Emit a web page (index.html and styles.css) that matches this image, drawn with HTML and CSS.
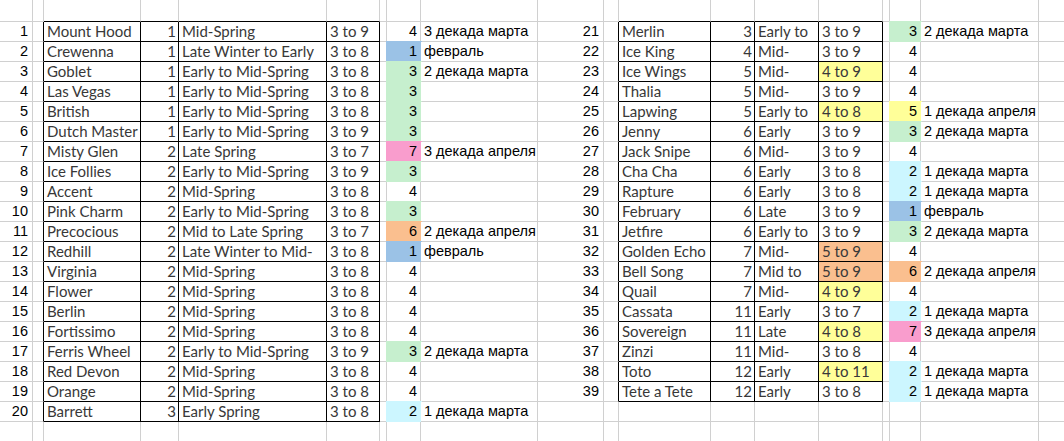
FILE: index.html
```html
<!DOCTYPE html>
<html lang="ru">
<head>
<meta charset="utf-8">
<title>Sheet</title>
<link rel="stylesheet" href="styles.css">
</head>
<body>
<div class="s">
<div></div><div></div><div class="bt"></div><div class="bt"></div><div class="bt"></div><div class="bt"></div><div></div><div></div><div></div><div></div><div></div><div class="bt"></div><div class="bt"></div><div class="bt"></div><div class="bt"></div><div></div><div></div><div></div><div></div>

<div class="n rn">1</div><div class="bl"></div><div class="t">Mount Hood</div><div class="t r">1</div><div class="t">Mid-Spring</div><div class="t">3 to 9</div><div></div><div class="n">4</div><div>3 декада марта</div>
<div class="n rn">21</div><div class="bl"></div><div class="t">Merlin</div><div class="t r">3</div><div class="t">Early to</div><div class="t">3 to 9</div><div></div><div class="n fg">3</div><div>2 декада марта</div><div></div>

<div class="n rn">2</div><div class="bl"></div><div class="t">Crewenna</div><div class="t r">1</div><div class="t">Late Winter to Early</div><div class="t">3 to 8</div><div></div><div class="n fb">1</div><div>февраль</div>
<div class="n rn">22</div><div class="bl"></div><div class="t">Ice King</div><div class="t r">4</div><div class="t">Mid-</div><div class="t">3 to 9</div><div></div><div class="n">4</div><div></div><div></div>

<div class="n rn">3</div><div class="bl"></div><div class="t">Goblet</div><div class="t r">1</div><div class="t">Early to Mid-Spring</div><div class="t">3 to 8</div><div></div><div class="n fg">3</div><div>2 декада марта</div>
<div class="n rn">23</div><div class="bl"></div><div class="t">Ice Wings</div><div class="t r">5</div><div class="t">Mid-</div><div class="t ty">4 to 9</div><div></div><div class="n">4</div><div></div><div></div>

<div class="n rn">4</div><div class="bl"></div><div class="t">Las Vegas</div><div class="t r">1</div><div class="t">Early to Mid-Spring</div><div class="t">3 to 8</div><div></div><div class="n fg">3</div><div></div>
<div class="n rn">24</div><div class="bl"></div><div class="t">Thalia</div><div class="t r">5</div><div class="t">Mid-</div><div class="t">3 to 9</div><div></div><div class="n">4</div><div></div><div></div>

<div class="n rn">5</div><div class="bl"></div><div class="t">British</div><div class="t r">1</div><div class="t">Early to Mid-Spring</div><div class="t">3 to 8</div><div></div><div class="n fg">3</div><div></div>
<div class="n rn">25</div><div class="bl"></div><div class="t">Lapwing</div><div class="t r">5</div><div class="t">Early to</div><div class="t ty">4 to 8</div><div></div><div class="n fy">5</div><div>1 декада апреля</div><div></div>

<div class="n rn">6</div><div class="bl"></div><div class="t">Dutch Master</div><div class="t r">1</div><div class="t">Early to Mid-Spring</div><div class="t">3 to 9</div><div></div><div class="n fg">3</div><div></div>
<div class="n rn">26</div><div class="bl"></div><div class="t">Jenny</div><div class="t r">6</div><div class="t">Early</div><div class="t">3 to 9</div><div></div><div class="n fg">3</div><div>2 декада марта</div><div></div>

<div class="n rn">7</div><div class="bl"></div><div class="t">Misty Glen</div><div class="t r">2</div><div class="t">Late Spring</div><div class="t">3 to 7</div><div></div><div class="n fp">7</div><div>3 декада апреля</div>
<div class="n rn">27</div><div class="bl"></div><div class="t">Jack Snipe</div><div class="t r">6</div><div class="t">Mid-</div><div class="t">3 to 9</div><div></div><div class="n">4</div><div></div><div></div>

<div class="n rn">8</div><div class="bl"></div><div class="t">Ice Follies</div><div class="t r">2</div><div class="t">Early to Mid-Spring</div><div class="t">3 to 9</div><div></div><div class="n fg">3</div><div></div>
<div class="n rn">28</div><div class="bl"></div><div class="t">Cha Cha</div><div class="t r">6</div><div class="t">Early</div><div class="t">3 to 8</div><div></div><div class="n fc">2</div><div>1 декада марта</div><div></div>

<div class="n rn">9</div><div class="bl"></div><div class="t">Accent</div><div class="t r">2</div><div class="t">Mid-Spring</div><div class="t">3 to 8</div><div></div><div class="n">4</div><div></div>
<div class="n rn">29</div><div class="bl"></div><div class="t">Rapture</div><div class="t r">6</div><div class="t">Early</div><div class="t">3 to 8</div><div></div><div class="n fc">2</div><div>1 декада марта</div><div></div>

<div class="n rn">10</div><div class="bl"></div><div class="t">Pink Charm</div><div class="t r">2</div><div class="t">Early to Mid-Spring</div><div class="t">3 to 8</div><div></div><div class="n fg">3</div><div></div>
<div class="n rn">30</div><div class="bl"></div><div class="t">February</div><div class="t r">6</div><div class="t">Late</div><div class="t">3 to 9</div><div></div><div class="n fb">1</div><div>февраль</div><div></div>

<div class="n rn">11</div><div class="bl"></div><div class="t">Precocious</div><div class="t r">2</div><div class="t">Mid to Late Spring</div><div class="t">3 to 7</div><div></div><div class="n fo">6</div><div>2 декада апреля</div>
<div class="n rn">31</div><div class="bl"></div><div class="t">Jetfire</div><div class="t r">6</div><div class="t">Early to</div><div class="t">3 to 9</div><div></div><div class="n fg">3</div><div>2 декада марта</div><div></div>

<div class="n rn">12</div><div class="bl"></div><div class="t">Redhill</div><div class="t r">2</div><div class="t">Late Winter to Mid-</div><div class="t">3 to 8</div><div></div><div class="n fb">1</div><div>февраль</div>
<div class="n rn">32</div><div class="bl"></div><div class="t">Golden Echo</div><div class="t r">7</div><div class="t">Mid-</div><div class="t to">5 to 9</div><div></div><div class="n">4</div><div></div><div></div>

<div class="n rn">13</div><div class="bl"></div><div class="t">Virginia</div><div class="t r">2</div><div class="t">Mid-Spring</div><div class="t">3 to 8</div><div></div><div class="n">4</div><div></div>
<div class="n rn">33</div><div class="bl"></div><div class="t">Bell Song</div><div class="t r">7</div><div class="t">Mid to</div><div class="t to">5 to 9</div><div></div><div class="n fo">6</div><div>2 декада апреля</div><div></div>

<div class="n rn">14</div><div class="bl"></div><div class="t">Flower</div><div class="t r">2</div><div class="t">Mid-Spring</div><div class="t">3 to 8</div><div></div><div class="n">4</div><div></div>
<div class="n rn">34</div><div class="bl"></div><div class="t">Quail</div><div class="t r">7</div><div class="t">Mid-</div><div class="t ty">4 to 9</div><div></div><div class="n">4</div><div></div><div></div>

<div class="n rn">15</div><div class="bl"></div><div class="t">Berlin</div><div class="t r">2</div><div class="t">Mid-Spring</div><div class="t">3 to 8</div><div></div><div class="n">4</div><div></div>
<div class="n rn">35</div><div class="bl"></div><div class="t">Cassata</div><div class="t r">11</div><div class="t">Early</div><div class="t">3 to 7</div><div></div><div class="n fc">2</div><div>1 декада марта</div><div></div>

<div class="n rn">16</div><div class="bl"></div><div class="t">Fortissimo</div><div class="t r">2</div><div class="t">Mid-Spring</div><div class="t">3 to 8</div><div></div><div class="n">4</div><div></div>
<div class="n rn">36</div><div class="bl"></div><div class="t">Sovereign</div><div class="t r">11</div><div class="t">Late</div><div class="t ty">4 to 8</div><div></div><div class="n fp">7</div><div>3 декада апреля</div><div></div>

<div class="n rn">17</div><div class="bl"></div><div class="t">Ferris Wheel</div><div class="t r">2</div><div class="t">Early to Mid-Spring</div><div class="t">3 to 9</div><div></div><div class="n fg">3</div><div>2 декада марта</div>
<div class="n rn">37</div><div class="bl"></div><div class="t">Zinzi</div><div class="t r">11</div><div class="t">Mid-</div><div class="t">3 to 8</div><div></div><div class="n">4</div><div></div><div></div>

<div class="n rn">18</div><div class="bl"></div><div class="t">Red Devon</div><div class="t r">2</div><div class="t">Mid-Spring</div><div class="t">3 to 8</div><div></div><div class="n">4</div><div></div>
<div class="n rn">38</div><div class="bl"></div><div class="t">Toto</div><div class="t r">12</div><div class="t">Early</div><div class="t ty">4 to 11</div><div></div><div class="n fc">2</div><div>1 декада марта</div><div></div>

<div class="n rn">19</div><div class="bl"></div><div class="t">Orange</div><div class="t r">2</div><div class="t">Mid-Spring</div><div class="t">3 to 8</div><div></div><div class="n">4</div><div></div>
<div class="n rn">39</div><div class="bl"></div><div class="t">Tete a Tete</div><div class="t r">12</div><div class="t">Early</div><div class="t">3 to 8</div><div></div><div class="n fc">2</div><div>1 декада марта</div><div></div>

<div class="n rn">20</div><div class="bl"></div><div class="t">Barrett</div><div class="t r">3</div><div class="t">Early Spring</div><div class="t">3 to 8</div><div></div><div class="n fc">2</div><div>1 декада марта</div>
<div></div><div></div><div></div><div></div><div></div><div></div><div></div><div></div><div></div><div></div>

<div></div><div></div><div></div><div></div><div></div><div></div><div></div><div></div><div></div><div></div><div></div><div></div><div></div><div></div><div></div><div></div><div></div><div></div><div></div>
</div>
</body>
</html>
```

FILE: styles.css
```css
html, body {
  margin: 0;
  padding: 0;
  background: #fff;
  overflow: hidden;
}

.s {
  display: grid;
  grid-template-columns: 33px 11px 97px 38px 148px 53px 7px 34px 117px 66px 15px 92px 44px 64px 64px 7px 31px 118px 60px;
  grid-template-rows: 22px repeat(21, 20px);
  width: 1099px;
}

.s > div {
  box-sizing: border-box;
  border-right: 1px solid #d0d0d0;
  border-bottom: 1px solid #d0d0d0;
  background: #fff;
  white-space: nowrap;
  overflow: hidden;
  padding: 0 2px 0 3px;
  font-family: "Liberation Sans", Arial, sans-serif;
  font-size: 14.5px;
  line-height: 19px;
  color: #000;
}

.s > .t {
  border-right-color: #000;
  border-bottom-color: #000;
  font-family: Lato, "Open Sans", sans-serif;
  font-size: 15px;
  line-height: 18px;
  color: #383838;
  padding-left: 3px;
  padding-right: 2px;
}

.s > .r { text-align: right; }
.s > .n { text-align: right; padding-right: 3px; }
.s > .rn { padding-right: 4px; }
.s > .bl { border-right-color: #000; }
.s > .bt { border-bottom-color: #000; }

.s > .ty { background: #ffff99; }
.s > .to { background: #fabf8f; }

.s > .fg { background: #c6efce; border-color: #c6efce; box-shadow: 0 0 0 1px #c6efce; }
.s > .fb { background: #9bc2e6; border-color: #9bc2e6; box-shadow: 0 0 0 1px #9bc2e6; }
.s > .fc { background: #ccf6ff; border-color: #ccf6ff; box-shadow: 0 0 0 1px #ccf6ff; }
.s > .fp { background: #f99dcd; border-color: #f99dcd; box-shadow: 0 0 0 1px #f99dcd; }
.s > .fo { background: #fabf8f; border-color: #fabf8f; box-shadow: 0 0 0 1px #fabf8f; }
.s > .fy { background: #ffff99; border-color: #ffff99; box-shadow: 0 0 0 1px #ffff99; }
```
